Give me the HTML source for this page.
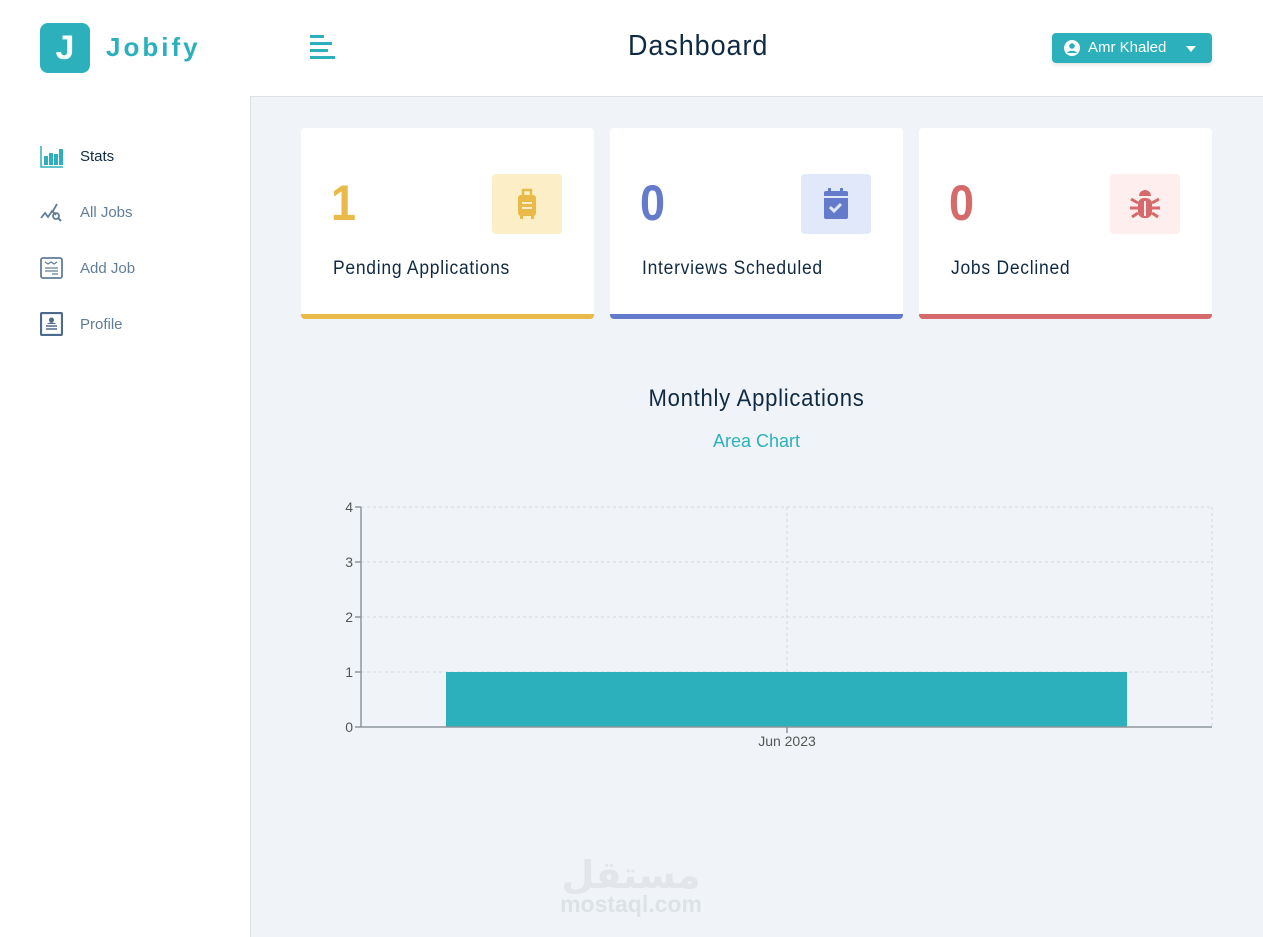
<!DOCTYPE html>
<html><head><meta charset="utf-8"><style>
*{margin:0;padding:0;box-sizing:border-box}
body{width:1263px;height:937px;overflow:hidden;background:#fff;font-family:"Liberation Sans","DejaVu Sans",sans-serif;position:relative}
.side{position:absolute;left:0;top:0;width:250px;height:937px;background:#fff}
.main{position:absolute;left:250px;top:96px;width:1013px;height:841px;background:#f0f4f8;border-top:1px solid #dde1e6;border-left:1px solid #dde1e6}
.logo{position:absolute;left:40px;top:23px;width:50px;height:50px;border-radius:8px;background:#2cb1bc;color:#fff;font:bold 34px "Liberation Sans",sans-serif;text-align:center;line-height:50px}
.brand{position:absolute;left:106px;top:32px;color:#2cb1bc;font:bold 26px "Liberation Sans",sans-serif;letter-spacing:3px}
.title{position:absolute;left:628px;top:30px;font-size:29px;color:#102a43;letter-spacing:1px;transform:scaleX(.93);transform-origin:left}
.btn{position:absolute;left:1052px;top:33px;width:160px;height:30px;border-radius:4px;background:#2cb1bc;color:#fff;font-size:15px;box-shadow:0 2px 4px rgba(0,0,0,.12)}
.nav{position:absolute;left:40px;font-size:15px;color:#627d98}
.nav span{position:absolute;left:40px;top:1px;white-space:nowrap}
.card{position:absolute;top:128px;width:293px;height:191px;background:#fff;border-radius:4px;border-bottom:5px solid}
.num{position:absolute;left:30px;top:46px;font-size:50px;font-weight:bold;transform:scaleX(.9);transform-origin:left}
.ib{position:absolute;left:191px;top:46px;width:70px;height:60px;border-radius:4px}
.lbl{position:absolute;left:32px;top:130px;font-size:19px;color:#102a43;letter-spacing:.8px;transform:scaleX(.92);transform-origin:left}
</style></head><body>
<div class="side"></div>
<div class="logo">J</div>
<div class="brand">Jobify</div>
<svg style="position:absolute;left:310px;top:35px" width="26" height="26"><g fill="#2cb1bc"><rect x="0" y="0" width="14" height="3"/><rect x="0" y="7" width="22" height="3"/><rect x="0" y="14" width="18" height="3"/><rect x="0" y="21" width="25" height="3"/></g></svg>
<div class="title">Dashboard</div>
<div class="btn"><svg style="position:absolute;left:12px;top:7px" width="16" height="16" viewBox="0 0 16 16"><circle cx="8" cy="8" r="8" fill="#fff"/><circle cx="8" cy="6" r="2.8" fill="#2cb1bc"/><path d="M3 13c1.5-3 8.5-3 10 0" fill="#2cb1bc"/></svg><span style="position:absolute;left:36px;top:6px">Amr Khaled</span><svg style="position:absolute;left:134px;top:13px" width="10" height="6"><path d="M0 0h10L5 6z" fill="#fff"/></svg></div>

<div class="nav" style="top:147px;color:#102a43"><svg width="24" height="22" style="position:absolute;top:-1px"><path d="M1 0v21h22" stroke="#2cb1bc" fill="none" stroke-width="1.5"/><g fill="#2cb1bc"><rect x="4" y="10" width="4" height="9"/><rect x="9" y="7" width="4" height="12"/><rect x="14" y="8" width="4" height="11"/><rect x="19" y="3" width="4" height="16"/></g></svg><span>Stats</span></div>
<div class="nav" style="top:203px"><svg width="24" height="20" style="position:absolute;top:0"><path d="M1 15l4-5 3 4 4-6 4 4M17 1l-4 7" stroke="#627d98" fill="none" stroke-width="1.8"/><circle cx="16" cy="13" r="3" stroke="#627d98" fill="none" stroke-width="1.8"/><path d="M18 15l3 3" stroke="#627d98" stroke-width="2"/></svg><span>All Jobs</span></div>
<div class="nav" style="top:259px"><svg width="23" height="22" style="position:absolute;top:-2px"><rect x="1" y="1" width="21" height="20" rx="2" stroke="#627d98" fill="none" stroke-width="1.8"/><path d="M5 5l3 2 3-2 3 2 3-2M5 11h13M5 14h13M12 17h6" stroke="#627d98" stroke-width="1.2" fill="none"/></svg><span>Add Job</span></div>
<div class="nav" style="top:315px"><svg width="23" height="24" style="position:absolute;top:-3px"><rect x="1" y="1" width="21" height="22" rx="1" stroke="#4e6a8a" fill="none" stroke-width="2.2"/><circle cx="11.5" cy="8" r="2.5" fill="#4e6a8a"/><path d="M6 14h11M6 17h11" stroke="#4e6a8a" stroke-width="1.6"/><path d="M7 12c1-2 8-2 9 0z" fill="#4e6a8a"/></svg><span>Profile</span></div>

<div class="main"></div>

<div class="card" style="left:301px;border-color:#e9b949"><div class="num" style="color:#e9b949">1</div><div class="ib" style="background:#fcefc7"><svg style="position:absolute;left:23px;top:13px" width="24" height="34" viewBox="0 0 24 34"><path d="M8 8V3h8v5" stroke="#e9b949" stroke-width="2.5" fill="none"/><rect x="3" y="8" width="18" height="21" rx="3" fill="#e9b949"/><rect x="5" y="28" width="3" height="4" fill="#e9b949"/><rect x="16" y="28" width="3" height="4" fill="#e9b949"/><path d="M7 16h10M7 21h10" stroke="#fcefc7" stroke-width="2"/></svg></div><div class="lbl">Pending Applications</div></div>
<div class="card" style="left:610px;border-color:#647acb"><div class="num" style="color:#647acb">0</div><div class="ib" style="background:#e0e8f9"><svg style="position:absolute;left:21px;top:13px" width="28" height="34" viewBox="0 0 28 34"><rect x="6" y="1" width="3" height="5" fill="#647acb"/><rect x="18" y="1" width="3" height="5" fill="#647acb"/><rect x="2" y="4" width="24" height="28" rx="2" fill="#647acb"/><rect x="2" y="9" width="24" height="2" fill="#e0e8f9"/><path d="M8 20l4 4 7-7" stroke="#e0e8f9" stroke-width="3" fill="none"/></svg></div><div class="lbl">Interviews Scheduled</div></div>
<div class="card" style="left:919px;border-color:#d66a6a"><div class="num" style="color:#d66a6a">0</div><div class="ib" style="background:#ffeeee"><svg style="position:absolute;left:19px;top:13px" width="32" height="34" viewBox="0 0 32 34"><path d="M10 9a6 6 0 0 1 12 0z" fill="#d66a6a"/><rect x="9" y="11" width="14" height="20" rx="6" fill="#d66a6a"/><path d="M16 14v15" stroke="#ffeeee" stroke-width="2"/><path d="M2 12l7 4M30 12l-7 4M1 21h8M31 21h-8M3 30l6-4M29 30l-6-4" stroke="#d66a6a" stroke-width="3"/></svg></div><div class="lbl">Jobs Declined</div></div>

<div style="position:absolute;left:250px;width:1013px;top:385px;text-align:center;font-size:24px;color:#102a43;letter-spacing:.8px;transform:scaleX(.92)">Monthly Applications</div>
<div style="position:absolute;left:250px;width:1013px;top:431px;text-align:center;font-size:18px;color:#2cb1bc">Area Chart</div>

<svg style="position:absolute;left:0;top:0" width="1263" height="937">
<g stroke="#d4d9de" stroke-dasharray="3 3" stroke-width="1"><path d="M361 507H1212M361 562H1212M361 617H1212M361 672H1212M787 507V727M1212 507V727"/></g>
<rect x="446" y="672" width="681" height="55" fill="#2cb1bc"/>
<g stroke="#8d959c" stroke-width="1.5" fill="none"><path d="M361 507V727H1212M355 507h6M355 562h6M355 617h6M355 672h6M355 727h6M787 727v6"/></g>
<g fill="#555" font-size="14" font-family="Liberation Sans,sans-serif" text-anchor="end"><text x="353" y="512">4</text><text x="353" y="567">3</text><text x="353" y="622">2</text><text x="353" y="677">1</text><text x="353" y="732">0</text><text x="787" y="746" text-anchor="middle">Jun 2023</text></g>
<text x="631" y="888" font-size="38" font-weight="bold" fill="#e2e6ea" text-anchor="middle" font-family="DejaVu Sans,sans-serif">مستقل</text>
<text x="631" y="912" font-size="23" font-weight="bold" fill="#dde2e7" text-anchor="middle" font-family="Liberation Sans,sans-serif">mostaql.com</text>
</svg>
</body></html>
